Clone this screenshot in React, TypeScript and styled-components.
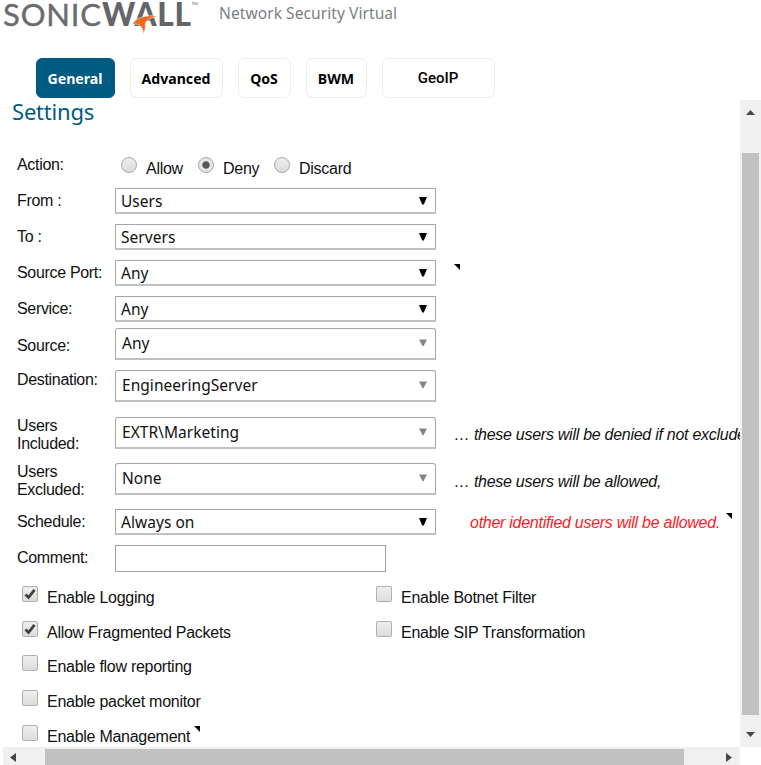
import React from "react";
import styled, { createGlobalStyle } from "styled-components";

const GlobalStyle = createGlobalStyle`
  * { box-sizing: border-box; }
  body { margin: 0; background: #fff; }
`;

const sans = `"Liberation Sans", Arial, sans-serif`;
const humanist = `"Noto Sans", "Open Sans", sans-serif`;

const Page = styled.div`
  width: 761px;
  height: 765px;
  display: flex;
  flex-direction: column;
  color: #111;
  font-family: ${sans};
  white-space: nowrap;
`;

const Header = styled.header`
  height: 58px;
  flex: none;
  display: flex;
  align-items: flex-start;
`;

const Logo = styled.svg`
  display: block;
  flex: none;
  margin-right: 18px;
  overflow: visible;
`;

const Product = styled.span`
  font: 15.6px/20px ${humanist};
  letter-spacing: 0.04px;
  color: #7c7f83;
  margin-top: 3px;
`;

const Tabs = styled.nav`
  height: 40px;
  flex: none;
  display: flex;
  gap: 15px;
  padding-left: 36px;
`;

const Tab = styled.button<{ $w: number; $active?: boolean; $plain?: boolean }>`
  width: ${(p) => p.$w}px;
  height: 40px;
  padding: ${(p) => (p.$plain ? "0 1px 0 0" : "1px 1px 0 0")};
  border: 1px solid ${(p) => (p.$active ? "#005b82" : "#ededed")};
  border-radius: 6px;
  background: ${(p) => (p.$active ? "#005b82" : "#fff")};
  color: ${(p) => (p.$active ? "#fff" : "#000")};
  font: ${(p) => (p.$plain ? `500 15px/20px Roboto, ${sans}` : `700 14.1px/20px ${humanist}`)};
`;

const Body = styled.div`
  flex: 1;
  min-height: 0;
  display: flex;
`;

const Left = styled.div`
  width: 740px;
  display: flex;
  flex-direction: column;
`;

const Content = styled.main`
  height: 649px;
  overflow-x: clip;
`;

const Title = styled.h1`
  margin: -2px 0 0 12px;
  height: 57px;
  font: 400 22px/30px ${humanist};
  letter-spacing: -0.2px;
  color: #005b82;
`;

const Row = styled.div<{ $h: number }>`
  height: ${(p) => p.$h}px;
  display: flex;
  align-items: flex-start;
  padding-left: 17px;
`;

const Label = styled.div<{ $top: number }>`
  width: 98px;
  flex: none;
  margin-top: ${(p) => p.$top}px;
  font-size: 16px;
  line-height: 18px;
  letter-spacing: -0.32px;
  white-space: pre-line;
`;

const Select = styled.div<{ $combo?: boolean }>`
  width: 321px;
  height: ${(p) => (p.$combo ? 32 : 26)}px;
  flex: none;
  display: flex;
  justify-content: space-between;
  padding: ${(p) => (p.$combo ? "3px 8px 0 6px" : "1px 8px 0 5px")};
  border: 1px solid #a6a6a6;
  border-width: 1px 1px 2px;
  border-bottom-color: #c0c0c0;
  border-radius: ${(p) => (p.$combo ? "3px 3px 0 0" : "1px")};
  font: 15.5px/22px ${humanist};
  letter-spacing: 0.04px;
`;

const Arrow = styled.svg<{ $combo?: boolean }>`
  margin-top: 7px;
  fill: ${(p) => (p.$combo ? "#858585" : "#000")};
`;

const TextInput = styled.input`
  width: 271px;
  height: 27px;
  border: 1px solid #a0a0a0;
  outline: none;
`;

const Note = styled.span<{ $left: number; $top: number; $red?: boolean }>`
  margin: ${(p) => p.$top}px 0 0 ${(p) => p.$left}px;
  font: italic 16px/18px ${sans};
  letter-spacing: -0.27px;
  color: ${(p) => (p.$red ? "#ff1a24" : "#111")};
`;

const Corner = styled.svg<{ $left: number; $top: number }>`
  flex: none;
  margin: ${(p) => p.$top}px 0 0 ${(p) => p.$left}px;
`;

const Radios = styled.div`
  display: flex;
  padding-left: 6px;
`;

const RadioOption = styled.div<{ $w: number }>`
  width: ${(p) => p.$w}px;
  display: flex;
  gap: 9px;
`;

const RadioDot = styled.span<{ $on?: boolean }>`
  width: 16px;
  height: 16px;
  margin-top: 4px;
  border: 1px solid #a9a9a9;
  border-radius: 50%;
  background: ${(p) =>
    p.$on ? "radial-gradient(circle, #575757 3.2px, #e6e6e6 4.2px)" : "linear-gradient(#ececec, #dcdcdc)"};
`;

const OptionText = styled.span<{ $top: number }>`
  margin-top: ${(p) => p.$top}px;
  font-size: 16px;
  line-height: 18px;
  letter-spacing: -0.27px;
`;

const Checks = styled.div`
  display: grid;
  grid-template-columns: 354px 1fr;
  grid-auto-rows: 34.7px;
  padding-left: 22px;
`;

const CheckItem = styled.div<{ $col: number }>`
  grid-column: ${(p) => p.$col};
  display: flex;
  align-items: flex-start;
`;

const Box = styled.span`
  width: 16px;
  height: 16px;
  margin-right: 9px;
  border: 1px solid #b0b0b0;
  border-radius: 2px;
  background: linear-gradient(#efefef, #dcdcdc);
  display: flex;
`;

const VBar = styled.div`
  width: 21px;
  height: 647px;
  margin-top: 2px;
  padding: 10px 2px 8px;
  background: #f0f0f0;
  display: flex;
  flex-direction: column;
  align-items: center;
`;

const VThumb = styled.div`
  width: 17px;
  height: 562px;
  margin: 38px 0 17px;
  background: #c1c1c1;
`;

const HBar = styled.div`
  height: 18px;
  margin-left: 3px;
  padding: 2px 7px 0;
  background: #f0f0f0;
  display: flex;
`;

const HThumb = styled.div`
  width: 639px;
  height: 16px;
  margin: 0 42px 0 29px;
  background: #c1c1c1;
`;

const ArrowTip = styled.svg`
  flex: none;
`;

type Field = {
  label: string;
  value: string;
  h: number;
  top: number;
  combo?: boolean;
  note?: { text: string; left: number; top: number; red?: boolean };
  corner?: [number, number];
};

const fields: Field[] = [
  { label: "From :", value: "Users", h: 36, top: 4 },
  { label: "To :", value: "Servers", h: 36, top: 4 },
  { label: "Source Port:", value: "Any", h: 36, top: 4, corner: [18, 4] },
  { label: "Service:", value: "Any", h: 32, top: 4 },
  { label: "Source:", value: "Any", h: 42, top: 9, combo: true },
  { label: "Destination:", value: "EngineeringServer", h: 47, top: 1, combo: true },
  {
    label: "Users\nIncluded:", value: "EXTR\\Marketing", h: 46, top: 0, combo: true,
    note: { text: "… these users will be denied if not excluded,", left: 18, top: 9 },
  },
  {
    label: "Users\nExcluded:", value: "None", h: 46, top: 0, combo: true,
    note: { text: "… these users will be allowed,", left: 18, top: 10 },
  },
  {
    label: "Schedule:", value: "Always on", h: 36, top: 4,
    note: { text: "other identified users will be allowed.", left: 34, top: 5, red: true },
    corner: [6, 4],
  },
];

const checks = [
  { text: "Enable Logging", on: true, col: 1 },
  { text: "Enable Botnet Filter", on: false, col: 2 },
  { text: "Allow Fragmented Packets", on: true, col: 1 },
  { text: "Enable SIP Transformation", on: false, col: 2 },
  { text: "Enable flow reporting", on: false, col: 1 },
  { text: "Enable packet monitor", on: false, col: 1 },
  { text: "Enable Management", on: false, col: 1, corner: true },
];

const CornerMark = ({ left, top }: { left: number; top: number }) => (
  <Corner $left={left} $top={top} width="6" height="6">
    <path d="M0 0H6V6Z" />
  </Corner>
);

const FieldRow = ({ f }: { f: Field }) => (
  <Row $h={f.h}>
    <Label $top={f.top}>{f.label}</Label>
    <Select $combo={f.combo}>
      {f.value}
      <Arrow $combo={f.combo} width="8" height="8">
        <path d={f.combo ? "M0 0.5H8L4.6 7H3.4Z" : "M0 0H8L4.8 7.5H3.2Z"} />
      </Arrow>
    </Select>
    {f.note && (
      <Note $left={f.note.left} $top={f.note.top} $red={f.note.red}>
        {f.note.text}
      </Note>
    )}
    {f.corner && <CornerMark left={f.corner[0]} top={f.corner[1]} />}
  </Row>
);

export default function App() {
  return (
    <Page>
      <GlobalStyle />
      <Header>
        <Logo width="201" height="36">
          <text x="3" y="25.5" fontFamily="Lato" fontWeight="400" fontSize="31" fill="#6b6c6f" stroke="#6b6c6f" strokeWidth="0.4" textLength="98" lengthAdjust="spacing">SONIC</text>
          <text x="102" y="25.5" fontFamily="Lato" fontWeight="900" fontSize="31.5" fill="#646569" textLength="89" lengthAdjust="spacing">WALL</text>
          <text x="191" y="7" fontFamily="Liberation Sans" fontSize="7" fill="#777">™</text>
          <path d="M158 16.500C149 14 136 17 132 24.500C138 22.500 143 26 143.500 33.800C146.500 28 144.500 24.500 146 22C148.500 18.500 153 17 158 16.500Z" fill="#f26a21" stroke="#fff" strokeWidth="0.5" />
        </Logo>
        <Product>Network Security Virtual</Product>
      </Header>
      <Tabs>
        <Tab $w={79} $active>General</Tab>
        <Tab $w={93}>Advanced</Tab>
        <Tab $w={53}>QoS</Tab>
        <Tab $w={61}>BWM</Tab>
        <Tab $w={113} $plain>GeoIP</Tab>
      </Tabs>
      <Body>
        <Left>
          <Content>
            <Title>Settings</Title>
            <Row $h={35}>
              <Label $top={3}>Action:</Label>
              <Radios>
                <RadioOption $w={77}><RadioDot /><OptionText $top={7}>Allow</OptionText></RadioOption>
                <RadioOption $w={76}><RadioDot $on /><OptionText $top={7}>Deny</OptionText></RadioOption>
                <RadioOption $w={90}><RadioDot /><OptionText $top={7}>Discard</OptionText></RadioOption>
              </Radios>
            </Row>
            {fields.map((f) => <FieldRow key={f.label} f={f} />)}
            <Row $h={41}>
              <Label $top={4}>Comment:</Label>
              <TextInput aria-label="Comment" />
            </Row>
            <Checks>
              {checks.map((c) => (
                <CheckItem key={c.text} $col={c.col}>
                  <Box>
                    {c.on && (
                      <svg width="14" height="14" fill="none" stroke="#404040" strokeWidth="2.8">
                        <path d="M2.5 7.5L5.5 10.5L11.5 2.8" />
                      </svg>
                    )}
                  </Box>
                  <OptionText $top={2.9}>{c.text}</OptionText>
                  {c.corner && <CornerMark left={4} top={1} />}
                </CheckItem>
              ))}
            </Checks>
          </Content>
          <HBar>
            <ArrowTip width="6" height="16"><path d="M6 4V13L0 8.5Z" fill="#484848" /></ArrowTip>
            <HThumb />
            <ArrowTip width="6" height="16"><path d="M0 4V13L6 8.5Z" fill="#484848" /></ArrowTip>
          </HBar>
        </Left>
        <VBar>
          <ArrowTip width="9" height="5"><path d="M0 5H9L4.5 0Z" fill="#484848" /></ArrowTip>
          <VThumb />
          <ArrowTip width="9" height="5"><path d="M0 0H9L4.5 5Z" fill="#484848" /></ArrowTip>
        </VBar>
      </Body>
    </Page>
  );
}
